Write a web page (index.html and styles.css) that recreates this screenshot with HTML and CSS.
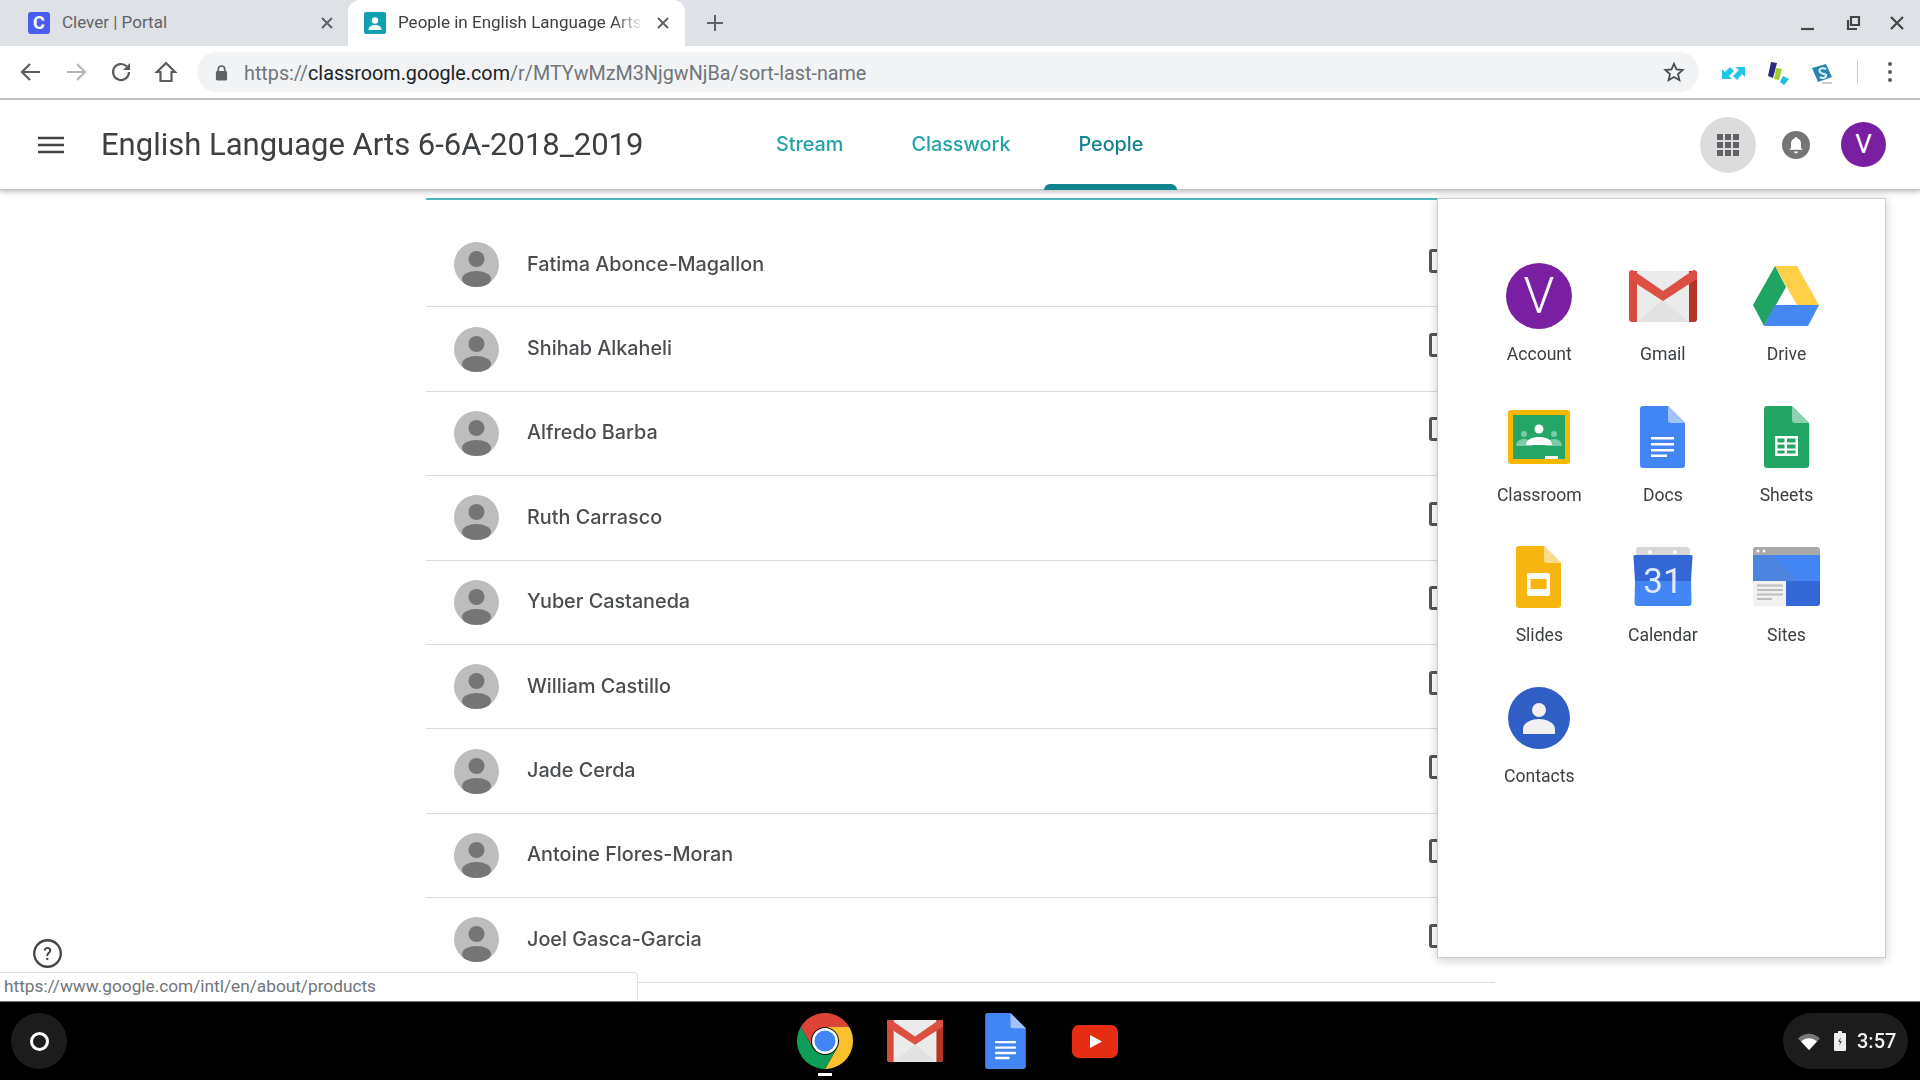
FILE: index.html
```html
<!DOCTYPE html>
<html lang="en">
<head>
<meta charset="utf-8">
<title>People in English Language Arts</title>
<link rel="stylesheet" href="styles.css">
</head>
<body>
<svg class="defs" width="0" height="0" aria-hidden="true">
  <defs>
    <symbol id="gmail" viewBox="0 0 68 68">
      <rect x="0" y="9" width="68" height="51" rx="3" fill="#ebebeb"/>
      <polygon points="34,38 8,60 60,60" fill="#e2e2e2"/>
      <path d="M3 9 H8 V60 H3 A3 3 0 0 1 0 57 V12 A3 3 0 0 1 3 9Z" fill="#d54b3d"/>
      <path d="M60 9 H65 A3 3 0 0 1 68 12 V57 A3 3 0 0 1 65 60 H60Z" fill="#b63524"/>
      <path d="M0 12 A3 3 0 0 1 5 9 L34 29 L63 9 A3 3 0 0 1 68 12 V17 L34 39 L0 17Z" fill="#dd4f43"/>
    </symbol>
    <symbol id="docs" viewBox="0 0 68 68">
      <path d="M14 3 H39 L56 20 V62 A3 3 0 0 1 53 65 H14 A3 3 0 0 1 11 62 V6 A3 3 0 0 1 14 3Z" fill="#4285f4"/>
      <path d="M39 3 L56 20 H42 A3 3 0 0 1 39 17Z" fill="#a1c2fa"/>
      <path d="M22 34h23v2.600H22zM22 40h23v2.600H22zM22 46h23v2.600H22zM22 51.500h16v2.600H22z" fill="#fff"/>
    </symbol>
  </defs>
</svg>

<div class="tabstrip">
  <div class="tab">
    <span class="favicon favicon-clever">C</span>
    <span class="tab-title">Clever | Portal</span>
    <svg class="tab-x" viewBox="0 0 14 14"><path d="M2 2l10 10M12 2L2 12"/></svg>
  </div>
  <div class="tab tab-active">
    <svg class="favicon" viewBox="0 0 22 22"><rect width="22" height="22" rx="2" fill="#11a0ae"/><circle cx="11" cy="8.500" r="3.200" fill="#fff"/><path d="M4.500 18c0-3.500 3-5 6.500-5s6.500 1.500 6.500 5z" fill="#fff"/></svg>
    <span class="tab-title tab-title-fade">People in English Language Arts</span>
    <svg class="tab-x" viewBox="0 0 14 14"><path d="M2 2l10 10M12 2L2 12"/></svg>
  </div>
  <svg class="newtab" viewBox="0 0 18 18"><path d="M9 1v16M1 9h16"/></svg>
  <div class="winctl">
    <svg viewBox="0 0 18 18"><path d="M2 15h13" /></svg>
    <svg viewBox="0 0 18 18"><path d="M7 3h8v8h-8zM4 6v9h9" /></svg>
    <svg viewBox="0 0 18 18"><path d="M3 3l12 12M15 3L3 15" /></svg>
  </div>
</div>

<div class="toolbar">
  <svg class="nav-ic" viewBox="0 0 24 24"><path d="M21 12H4M11 4l-8 8 8 8"/></svg>
  <svg class="nav-ic nav-ic-off" viewBox="0 0 24 24"><path d="M3 12h17M13 4l8 8-8 8"/></svg>
  <svg class="nav-ic" viewBox="0 0 24 24"><path d="M20 12a8 8 0 1 1-2.400-5.700"/><path class="fill" d="M21 3v7h-7z"/></svg>
  <svg class="nav-ic" viewBox="0 0 24 24"><path d="M12 3L3 12h3.500v9h11v-9H21z"/></svg>
  <div class="omnibox">
    <svg class="lock" viewBox="0 0 14 18"><path d="M3.500 8V5.500a3.500 3.500 0 0 1 7 0V8" fill="none" stroke="#5f6368" stroke-width="1.800"/><rect x="1" y="7.500" width="12" height="10" rx="1.500" fill="#5f6368"/></svg>
    <span class="url"><span class="url-dim">https://</span>classroom.google.com<span class="url-dim">/r/MTYwMzM3NjgwNjBa/sort-last-name</span></span>
    <svg class="star" viewBox="0 0 24 24"><path d="M12 3l2.700 6.200 6.800.6-5.100 4.500 1.500 6.700L12 17.500 6.100 21l1.500-6.700L2.500 9.800l6.800-.6z"/></svg>
  </div>
  <div class="exts">
    <svg viewBox="0 0 28 28"><path d="M3 21V11l3 3 5-5 4 4-5 5 3 3zM26 9v10l-3-3-5 6-4-4 6-6-4-3z" fill="#1fc6ec"/></svg>
    <svg viewBox="0 0 28 28"><path d="M7 4l6 1-4 15-5-2z" fill="#2a2a80"/><path d="M12 10l6 1-3 11-5-1z" fill="#a3cf2e"/><path d="M19 18l6 3-5 6-4-3z" fill="#1bc0e4"/></svg>
    <svg viewBox="0 0 28 28"><path d="M3 10l14-4 6 13-14 5z" fill="#2a86b0"/><path d="M17 11c-4-2-8 0-6 3s7 1 6 4-5 2-6 1" fill="none" stroke="#dff3fa" stroke-width="2"/><path d="M13 25h10" stroke="#b5bcc0" stroke-width="1.500"/></svg>
  </div>
  <span class="tool-sep"></span>
  <svg class="kebab" viewBox="0 0 6 22"><circle cx="3" cy="3" r="2"/><circle cx="3" cy="11" r="2"/><circle cx="3" cy="19" r="2"/></svg>
</div>

<header class="classbar">
  <svg class="hamburger" viewBox="0 0 26 18"><path d="M0 2h26M0 9h26M0 16h26"/></svg>
  <h1 class="class-title">English Language Arts 6-6A-2018_2019</h1>
  <nav class="class-tabs">
    <a class="class-tab"><span class="class-tab-text">Stream</span></a>
    <a class="class-tab"><span class="class-tab-text">Classwork</span></a>
    <a class="class-tab class-tab-on"><span class="class-tab-text">People</span></a>
  </nav>
  <div class="account-area">
    <span class="apps-btn">
      <svg viewBox="0 0 24 24"><path d="M1 1h6v6H1zM9 1h6v6H9zM17 1h6v6h-6zM1 9h6v6H1zM9 9h6v6H9zM17 9h6v6h-6zM1 17h6v6H1zM9 17h6v6H9zM17 17h6v6h-6z"/></svg>
    </span>
    <svg class="bell" viewBox="0 0 28 28"><circle cx="14" cy="14" r="14" fill="#757575"/><path d="M14 6a1.500 1.500 0 0 1 1.500 1.500c2.600.7 3.500 3 3.500 5.500v4l1.800 1.800H7.200L9 17v-4c0-2.500 1-4.800 3.500-5.500A1.500 1.500 0 0 1 14 6zM12 20.500h4a2 2 0 0 1-4 0z" fill="#fff"/></svg>
    <span class="avatar-v">V</span>
  </div>
</header>

<main class="page">
  <section class="roster">
    <div class="row"><svg class="person" viewBox="0 0 45 45"><circle cx="22.500" cy="22.500" r="22.500" fill="#bdbdbd"/><circle cx="22.500" cy="17" r="8" fill="#757575"/><ellipse cx="22.500" cy="37" rx="14.500" ry="8" fill="#757575"/></svg><span class="name">Fatima Abonce-Magallon</span><span class="mail"></span></div>
    <div class="row"><svg class="person" viewBox="0 0 45 45"><circle cx="22.500" cy="22.500" r="22.500" fill="#bdbdbd"/><circle cx="22.500" cy="17" r="8" fill="#757575"/><ellipse cx="22.500" cy="37" rx="14.500" ry="8" fill="#757575"/></svg><span class="name">Shihab Alkaheli</span><span class="mail"></span></div>
    <div class="row"><svg class="person" viewBox="0 0 45 45"><circle cx="22.500" cy="22.500" r="22.500" fill="#bdbdbd"/><circle cx="22.500" cy="17" r="8" fill="#757575"/><ellipse cx="22.500" cy="37" rx="14.500" ry="8" fill="#757575"/></svg><span class="name">Alfredo Barba</span><span class="mail"></span></div>
    <div class="row"><svg class="person" viewBox="0 0 45 45"><circle cx="22.500" cy="22.500" r="22.500" fill="#bdbdbd"/><circle cx="22.500" cy="17" r="8" fill="#757575"/><ellipse cx="22.500" cy="37" rx="14.500" ry="8" fill="#757575"/></svg><span class="name">Ruth Carrasco</span><span class="mail"></span></div>
    <div class="row"><svg class="person" viewBox="0 0 45 45"><circle cx="22.500" cy="22.500" r="22.500" fill="#bdbdbd"/><circle cx="22.500" cy="17" r="8" fill="#757575"/><ellipse cx="22.500" cy="37" rx="14.500" ry="8" fill="#757575"/></svg><span class="name">Yuber Castaneda</span><span class="mail"></span></div>
    <div class="row"><svg class="person" viewBox="0 0 45 45"><circle cx="22.500" cy="22.500" r="22.500" fill="#bdbdbd"/><circle cx="22.500" cy="17" r="8" fill="#757575"/><ellipse cx="22.500" cy="37" rx="14.500" ry="8" fill="#757575"/></svg><span class="name">William Castillo</span><span class="mail"></span></div>
    <div class="row"><svg class="person" viewBox="0 0 45 45"><circle cx="22.500" cy="22.500" r="22.500" fill="#bdbdbd"/><circle cx="22.500" cy="17" r="8" fill="#757575"/><ellipse cx="22.500" cy="37" rx="14.500" ry="8" fill="#757575"/></svg><span class="name">Jade Cerda</span><span class="mail"></span></div>
    <div class="row"><svg class="person" viewBox="0 0 45 45"><circle cx="22.500" cy="22.500" r="22.500" fill="#bdbdbd"/><circle cx="22.500" cy="17" r="8" fill="#757575"/><ellipse cx="22.500" cy="37" rx="14.500" ry="8" fill="#757575"/></svg><span class="name">Antoine Flores-Moran</span><span class="mail"></span></div>
    <div class="row"><svg class="person" viewBox="0 0 45 45"><circle cx="22.500" cy="22.500" r="22.500" fill="#bdbdbd"/><circle cx="22.500" cy="17" r="8" fill="#757575"/><ellipse cx="22.500" cy="37" rx="14.500" ry="8" fill="#757575"/></svg><span class="name">Joel Gasca-Garcia</span><span class="mail"></span></div>
  </section>

  <aside class="app-panel">
    <div class="app">
      <svg class="app-ic" viewBox="0 0 68 68"><circle cx="34" cy="34" r="33" fill="#7b1fa2"/><text x="34" y="51" class="app-v">V</text></svg>
      <span class="app-label">Account</span>
    </div>
    <div class="app">
      <svg class="app-ic" viewBox="0 0 68 68"><use href="#gmail"/></svg>
      <span class="app-label">Gmail</span>
    </div>
    <div class="app">
      <svg class="app-ic" viewBox="0 0 68 68"><polygon points="23,4 45,4 67,43 45,43" fill="#ffcf48"/><polygon points="23,4 1,43 12,64 34,25" fill="#1fa463"/><polygon points="23,43 67,43 56,64 12,64" fill="#4688f1"/></svg>
      <span class="app-label">Drive</span>
    </div>
    <div class="app">
      <svg class="app-ic" viewBox="0 0 68 68"><rect x="3" y="7" width="62" height="54" rx="3" fill="#f9b800"/><rect x="8" y="12" width="52" height="44" fill="#25a667"/><circle cx="19" cy="31" r="3" fill="#7fcaa6"/><circle cx="49" cy="31" r="3" fill="#7fcaa6"/><path d="M11 43c0-5 4-7 8-7s8 2 8 7zM41 43c0-5 4-7 8-7s8 2 8 7z" fill="#7fcaa6"/><circle cx="34" cy="26" r="4.500" fill="#fff"/><path d="M21 42c0-6 7-8 13-8s13 2 13 8z" fill="#fff"/><rect x="40" y="53" width="13" height="3" fill="#fff"/></svg>
      <span class="app-label">Classroom</span>
    </div>
    <div class="app">
      <svg class="app-ic" viewBox="0 0 68 68"><use href="#docs"/></svg>
      <span class="app-label">Docs</span>
    </div>
    <div class="app">
      <svg class="app-ic" viewBox="0 0 68 68"><path d="M15 3H40L57 20V62A3 3 0 0 1 54 65H15A3 3 0 0 1 12 62V6A3 3 0 0 1 15 3Z" fill="#23a566"/><path d="M40 3L57 20H43A3 3 0 0 1 40 17Z" fill="#8ed1b1"/><path d="M23 33h23v20H23zM25.500 35.500v4h7v-4zM35 35.500v4h8.500v-4zM25.500 41.500v4h7v-4zM35 41.500v4h8.500v-4zM25.500 47.500v3h7v-3zM35 47.500v3h8.500v-3z" fill="#fff" fill-rule="evenodd"/></svg>
      <span class="app-label">Sheets</span>
    </div>
    <div class="app">
      <svg class="app-ic" viewBox="0 0 68 68"><path d="M14 3H39L56 20V62A3 3 0 0 1 53 65H14A3 3 0 0 1 11 62V6A3 3 0 0 1 14 3Z" fill="#f6b60f"/><path d="M39 3L56 20H42A3 3 0 0 1 39 17Z" fill="#fadb8c"/><rect x="22" y="30" width="23" height="23" rx="2" fill="#fff"/><rect x="25.500" y="36" width="16" height="10" fill="#f6b60f"/></svg>
      <span class="app-label">Slides</span>
    </div>
    <div class="app">
      <svg class="app-ic" viewBox="0 0 68 68"><path d="M10 4H58A3 3 0 0 1 61 7V16H7V7A3 3 0 0 1 10 4Z" fill="#d7d7d7"/><circle cx="21" cy="9" r="2" fill="#fff"/><circle cx="46" cy="9" r="2" fill="#fff"/><path d="M6 12H62A1.500 1.500 0 0 1 63.500 14L62 38H6L4.500 14A1.500 1.500 0 0 1 6 12Z" fill="#3367d6"/><path d="M6 38H62L62.500 60A3 3 0 0 1 60 63H8A3 3 0 0 1 5.500 60Z" fill="#4285f4"/><text x="34" y="50" class="cal-num">31</text></svg>
      <span class="app-label">Calendar</span>
    </div>
    <div class="app">
      <svg class="app-ic" viewBox="0 0 68 68"><path d="M4 4H65A3 3 0 0 1 68 7V12H1V7A3 3 0 0 1 4 4Z" fill="#a9a9a9"/><circle cx="6" cy="8" r="1.500" fill="#fff"/><circle cx="12" cy="8" r="1.500" fill="#fff"/><rect x="1" y="12" width="67" height="26" fill="#4285f4"/><path d="M1 12H20L46 38H1Z" fill="#4d84e0"/><path d="M34 38H68V60A3 3 0 0 1 65 63H34Z" fill="#3367d6"/><path d="M1 38H34V63H4A3 3 0 0 1 1 60Z" fill="#f1f1f1"/><path d="M5 42.500h26M5 47h26M5 51.500h26M5 56h15" stroke="#bdbdbd" stroke-width="1.800"/></svg>
      <span class="app-label">Sites</span>
    </div>
    <div class="app">
      <svg class="app-ic" viewBox="0 0 68 68"><circle cx="34" cy="34" r="31" fill="#2f5ec4"/><circle cx="34" cy="26" r="7" fill="#f1f1f1"/><path d="M18 50V45C18 38 28 35 34 35S50 38 50 45V50Z" fill="#f1f1f1"/></svg>
      <span class="app-label">Contacts</span>
    </div>
  </aside>

  <svg class="help" viewBox="0 0 28 28"><circle cx="14" cy="14" r="12.800" fill="none" stroke="#444" stroke-width="2.200"/><text x="14" y="20" class="help-q">?</text></svg>
  <div class="status-bubble">https://www.google.com/intl/en/about/products</div>
</main>

<footer class="shelf">
  <span class="launcher"><span class="launcher-ring"></span></span>
  <div class="shelf-apps">
    <span class="shelf-app shelf-app-open">
      <svg class="chrome" viewBox="0 0 56 56">
        <path d="M52.250 14A28 28 0 0 0 3.750 14L15.880 35A14 14 0 0 1 28 14Z" fill="#db4437"/>
        <path transform="rotate(120 28 28)" d="M52.250 14A28 28 0 0 0 3.750 14L15.880 35A14 14 0 0 1 28 14Z" fill="#fbc02d"/>
        <path transform="rotate(240 28 28)" d="M52.250 14A28 28 0 0 0 3.750 14L15.880 35A14 14 0 0 1 28 14Z" fill="#0f9d58"/>
        <circle cx="28" cy="28" r="13" fill="#fff"/><circle cx="28" cy="28" r="10.500" fill="#4285f4"/>
      </svg>
    </span>
    <span class="shelf-app"><svg class="shelf-gmail" viewBox="0 9 68 51"><use href="#gmail" width="68" height="68"/></svg></span>
    <span class="shelf-app"><svg class="shelf-docs" viewBox="11 3 45 62"><use href="#docs" width="68" height="68"/></svg></span>
    <span class="shelf-app"><svg class="shelf-yt" viewBox="0 0 46 33"><rect width="46" height="33" rx="7" fill="#e52d14"/><path d="M18 10l12 6.500-12 6.500z" fill="#fff"/></svg></span>
  </div>
  <div class="tray">
    <svg class="wifi" viewBox="0 0 22 17"><path d="M0 5.500C6 -1 16 -1 22 5.500L11 17z" fill="#777"/><path d="M3 8.500C7.500 4 14.500 4 19 8.500L11 17z" fill="#fff"/></svg>
    <svg class="batt" viewBox="0 0 12 20"><path d="M4 0h4v2h3a1 1 0 0 1 1 1v16a1 1 0 0 1-1 1H1a1 1 0 0 1-1-1V3a1 1 0 0 1 1-1h3z" fill="#eee"/><path d="M6.800 6L4 11h2l-.8 4L8 10H6z" fill="#555"/></svg>
    <span class="clock">3:57</span>
  </div>
</footer>
</body>
</html>
```

FILE: styles.css
```css
* { box-sizing: border-box; }
html, body { margin: 0; height: 100%; }
body {
  width: 1920px;
  height: 1080px;
  overflow: hidden;
  display: flex;
  flex-direction: column;
  background: #fff;
  font-family: Roboto, "Liberation Sans", sans-serif;
  color: #3c4043;
  filter: blur(.4px);
}
.defs { position: absolute; }

/* tab strip */
.tabstrip {
  height: 46px;
  flex: none;
  display: flex;
  align-items: center;
  background: #dee1e6;
}
.tab {
  width: 348px;
  height: 46px;
  flex: none;
  display: flex;
  align-items: center;
  padding-left: 28px;
  font-size: 17px;
  color: #5f6368;
}
.tab-active {
  width: 337px;
  padding-left: 16px;
  background: #fff;
  border-radius: 12px 12px 0 0;
  color: #3c4043;
}
.favicon {
  width: 22px;
  height: 22px;
  flex: none;
  margin-right: 12px;
}
.favicon-clever {
  background: #4a5cf0;
  border-radius: 3px;
  color: #fff;
  font: 700 18px/22px Roboto, sans-serif;
  text-align: center;
}
.tab-title { width: 245px; flex: none; white-space: nowrap; margin-bottom: 2px; }
.tab-title-fade {
  width: 245px;
  -webkit-mask-image: linear-gradient(90deg, #000 88%, transparent);
  mask-image: linear-gradient(90deg, #000 88%, transparent);
}
.tab-x { width: 14px; height: 14px; flex: none; margin-left: 13px; }
.tab-title + .tab-x { fill: none; stroke: #5f6368; stroke-width: 2; }
.newtab { width: 18px; height: 18px; margin-left: 21px; fill: none; stroke: #5f6368; stroke-width: 2; }
.winctl { margin-left: auto; display: flex; gap: 26.500px; padding-right: 14px; }
.winctl svg { width: 18px; height: 18px; fill: none; stroke: #444; stroke-width: 2.200; }

/* toolbar */
.toolbar {
  height: 54px;
  flex: none;
  display: flex;
  align-items: center;
  padding-left: 19px;
  border-bottom: 2px solid #c8c8c8;
  background: #fff;
}
.nav-ic { width: 24px; height: 24px; margin-right: 21px; fill: none; stroke: #5a5d60; stroke-width: 2.200; flex: none; }
.nav-ic-off { stroke: #b4b6b9; }
.nav-ic .fill { fill: #5a5d60; stroke: none; }
.omnibox {
  width: 1502px;
  height: 40px;
  flex: none;
  margin-left: -2px;
  display: flex;
  align-items: center;
  background: #f1f3f4;
  border-radius: 20px;
  padding-left: 18px;
}
.lock { width: 13px; height: 17px; flex: none; }
.url { margin: 2px 0 0 16px; font-size: 19.750px; color: #202124; white-space: nowrap; }
.url-dim { color: #70757a; }
.star { width: 22px; height: 22px; margin-left: auto; margin-right: 14px; fill: none; stroke: #4a4d50; stroke-width: 2; }
.exts { display: flex; gap: 17px; margin-left: 20px; }
.exts svg { width: 28px; height: 28px; }
.tool-sep { width: 1px; height: 26px; background: #ccc; margin-left: 20px; }
.kebab { width: 6px; height: 22px; margin-left: 29px; fill: #5a5d60; }

/* class bar */
.classbar {
  height: 90px;
  flex: none;
  display: flex;
  align-items: center;
  padding-left: 38px;
  border-bottom: 1px solid #c4c4c4;
  box-shadow: 0 2px 5px rgba(0,0,0,.25);
  background: #fff;
  position: relative;
  z-index: 2;
}
.hamburger { width: 26px; height: 18px; fill: none; stroke: #444; stroke-width: 2.600; flex: none; }
.class-title {
  width: 641px;
  flex: none;
  margin: 0 0 0 37px;
  font: 400 31px/1 Roboto, sans-serif;
  color: #3c4043;
  white-space: nowrap;
}
.class-tabs { display: flex; height: 90px; }
.class-tab {
  display: flex;
  align-items: center;
  padding: 0 34px;
  font: 500 19.800px Inter, Roboto, sans-serif;
  color: #21a3a9;
  position: relative;
}
.class-tab-text { margin-bottom: 2px; }
.class-tab-on { color: #12848f; }
.class-tab-on::after {
  content: "";
  position: absolute;
  left: 0; right: 0; bottom: 0;
  height: 6px;
  background: #12848f;
  border-radius: 6px 6px 0 0;
}
.account-area { margin-left: auto; display: flex; align-items: center; padding-right: 34px; }
.apps-btn {
  width: 56px; height: 56px;
  border-radius: 50%;
  background: #dcdcdc;
  display: flex; align-items: center; justify-content: center;
}
.apps-btn svg { width: 24px; height: 24px; fill: #5f6368; }
.bell { width: 28px; height: 28px; margin-left: 26px; }
.avatar-v {
  width: 45px; height: 45px;
  margin-left: 31px;
  border-radius: 50%;
  background: #7b1fa2;
  color: #fff;
  font-size: 26px;
  line-height: 45px;
  text-align: center;
}

/* page */
.page {
  flex: 1;
  position: relative;
  overflow: hidden;
  padding-top: 8px;
  padding-left: 426px;
}
.roster {
  width: 1069px;
  border-top: 2px solid #4fb4bf;
  padding-top: 23px;
}
.row {
  height: 84.400px;
  display: flex;
  align-items: center;
  padding-left: 28px;
  border-bottom: 1px solid #dcdcdc;
}
.person { width: 45px; height: 45px; flex: none; }
.name {
  margin: 0 0 2px 28px;
  font: 500 19.800px Inter, Roboto, sans-serif;
  color: #4a4d50;
}
.mail {
  width: 30px;
  height: 24px;
  margin: 0 36px 8px auto;
  border: 3px solid #555;
  border-radius: 3px;
}

/* app launcher panel */
.app-panel {
  position: absolute;
  left: 1437px;
  top: 8px;
  width: 449px;
  height: 760px;
  background: #fff;
  border: 1px solid #ccc;
  box-shadow: 0 2px 10px rgba(0,0,0,.2);
  padding: 63px 0 0 39.500px;
  display: grid;
  grid-template-columns: repeat(3, 123.600px);
  grid-auto-rows: 140.700px;
  align-content: start;
}
.app { display: flex; flex-direction: column; align-items: center; }
.app-ic { width: 68px; height: 68px; flex: none; }
.app-label { margin-top: 14px; font-size: 17.600px; line-height: 20px; color: #3c4043; }
.app-v { font: 300 50px Roboto, sans-serif; fill: #fff; text-anchor: middle; }
.cal-num { font: 400 35px Roboto, sans-serif; fill: #dfe9fb; text-anchor: middle; }
.help { position: absolute; left: 33px; top: 749px; width: 29px; height: 29px; }
.help-q { font: 500 17px Roboto, sans-serif; fill: #444; text-anchor: middle; }
.status-bubble {
  position: absolute;
  left: 0;
  bottom: 0;
  width: 638px;
  height: 29px;
  padding-left: 4px;
  background: #fff;
  border: 1px solid #e2e2e2;
  border-left: 0;
  border-bottom: 0;
  border-radius: 0 4px 0 0;
  font-size: 17.250px;
  line-height: 27px;
  color: #70757a;
}

/* shelf */
.shelf {
  height: 79px;
  flex: none;
  display: grid;
  grid-template-columns: 1fr auto 1fr;
  align-items: center;
  background: #000;
  border-top: 1px solid #777;
  position: relative;
  z-index: 3;
}
.launcher {
  width: 56px; height: 56px;
  margin-left: 11px;
  border-radius: 50%;
  background: #1c1c1c;
  display: flex; align-items: center; justify-content: center;
}
.launcher-ring { width: 19px; height: 19px; border: 3px solid #fff; border-radius: 50%; }
.shelf-apps { display: flex; height: 78px; }
.shelf-app { width: 90px; display: flex; align-items: center; justify-content: center; position: relative; }
.shelf-app-open::after {
  content: "";
  position: absolute;
  left: 38px;
  bottom: 4px;
  width: 14px;
  height: 3px;
  background: #fff;
}
.chrome { width: 56px; height: 56px; }
.shelf-gmail { width: 56px; height: 42px; }
.shelf-docs { width: 41px; height: 56px; }
.shelf-yt { width: 46px; height: 33px; }
.tray {
  justify-self: end;
  margin-right: 12px;
  width: 125px;
  height: 56px;
  border-radius: 28px;
  background: #1c1c1c;
  display: flex;
  align-items: center;
  padding-left: 15px;
}
.wifi { width: 22px; height: 17px; }
.batt { width: 12px; height: 20px; margin-left: 14px; }
.clock { margin-left: 11px; font-size: 20px; font-weight: 500; color: #f1f1f1; }
```
